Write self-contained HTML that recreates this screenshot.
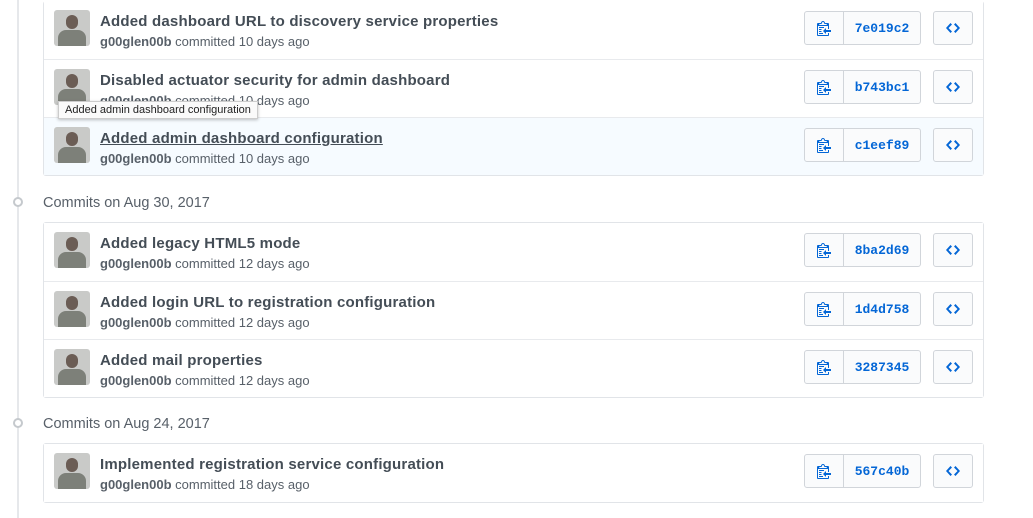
<!DOCTYPE html>
<html><head><meta charset="utf-8"><style>
*{box-sizing:border-box;margin:0;padding:0}
body{width:1033px;height:518px;background:#fff;font-family:"Liberation Sans",sans-serif;position:relative;overflow:hidden}
.line{position:absolute;left:17px;top:0;width:2px;height:518px;background:#e6e8eb}
.box{position:absolute;left:43px;width:941px;border:1px solid #e1e4e8;border-radius:3px}
.row{position:relative;height:58px;border-top:1px solid #e8eaed;background:#fff}
.row:first-child{border-top:none}
.row.hl{background:#f6fbff}
.av{position:absolute;left:10px;top:9px;width:36px;height:36px;border-radius:3px;background:#c9cac8;overflow:hidden}
.av .h{position:absolute;left:12px;top:5px;width:12px;height:14px;border-radius:6px;background:#6b5d55}
.av .b{position:absolute;left:4px;top:20px;width:28px;height:18px;border-radius:8px 8px 0 0;background:#7d8079}
.t{position:absolute;left:56px;top:12px;font-size:15px;letter-spacing:0.2px;font-weight:bold;color:#444d56;white-space:nowrap}
.t.u{text-decoration:underline}
.m{position:absolute;left:56px;top:33px;font-size:13px;color:#586069}
.m b{color:#586069}
.grp{position:absolute;left:760px;top:10px;height:34px;display:flex;border:1px solid #d1d5da;border-radius:3px;background:#fafbfc}
.grp .c{width:39px;border-right:1px solid #d1d5da;display:flex;align-items:center;justify-content:center}
.grp .s{width:76px;display:flex;align-items:center;justify-content:center;font-family:"Liberation Mono",monospace;font-weight:bold;font-size:13px;color:#0366d6}
.code{position:absolute;left:889px;top:10px;width:40px;height:34px;border:1px solid #d1d5da;border-radius:3px;background:#fafbfc;display:flex;align-items:center;justify-content:center}
.hd{position:absolute;left:43px;font-size:14.5px;color:#586069}
.dot{position:absolute;left:13px;width:10px;height:10px;border:2px solid #c5c9cd;border-radius:50%;background:#fff}
.tip{position:absolute;left:58px;top:101px;padding:2px 6px;font-size:11px;color:#222;background:#fafafa;border:1px solid #ccc;box-shadow:0 1px 3px rgba(0,0,0,.25);white-space:nowrap}
</style></head><body>
<div class="line"></div>

<div class="box" style="top:1px;border-top:none">
<div class="row"><div class="av"><div class="h"></div><div class="b"></div></div><div class="t">Added dashboard URL to discovery service properties</div><div class="m"><b>g00glen00b</b> committed 10 days ago</div>
<div class="grp"><div class="c">CLIP</div><div class="s">7e019c2</div></div><div class="code">CODE</div></div>
<div class="row"><div class="av"><div class="h"></div><div class="b"></div></div><div class="t">Disabled actuator security for admin dashboard</div><div class="m"><b>g00glen00b</b> committed 10 days ago</div>
<div class="grp"><div class="c">CLIP</div><div class="s">b743bc1</div></div><div class="code">CODE</div></div>
<div class="row hl"><div class="av"><div class="h"></div><div class="b"></div></div><div class="t u">Added admin dashboard configuration</div><div class="m"><b>g00glen00b</b> committed 10 days ago</div>
<div class="grp"><div class="c">CLIP</div><div class="s">c1eef89</div></div><div class="code">CODE</div></div>
</div>

<div class="dot" style="top:197px"></div>
<div class="hd" style="top:195px">Commits on Aug 30, 2017</div>

<div class="box" style="top:222px">
<div class="row"><div class="av"><div class="h"></div><div class="b"></div></div><div class="t">Added legacy HTML5 mode</div><div class="m"><b>g00glen00b</b> committed 12 days ago</div>
<div class="grp"><div class="c">CLIP</div><div class="s">8ba2d69</div></div><div class="code">CODE</div></div>
<div class="row"><div class="av"><div class="h"></div><div class="b"></div></div><div class="t">Added login URL to registration configuration</div><div class="m"><b>g00glen00b</b> committed 12 days ago</div>
<div class="grp"><div class="c">CLIP</div><div class="s">1d4d758</div></div><div class="code">CODE</div></div>
<div class="row"><div class="av"><div class="h"></div><div class="b"></div></div><div class="t">Added mail properties</div><div class="m"><b>g00glen00b</b> committed 12 days ago</div>
<div class="grp"><div class="c">CLIP</div><div class="s">3287345</div></div><div class="code">CODE</div></div>
</div>

<div class="dot" style="top:418px"></div>
<div class="hd" style="top:416px">Commits on Aug 24, 2017</div>

<div class="box" style="top:443px">
<div class="row"><div class="av"><div class="h"></div><div class="b"></div></div><div class="t">Implemented registration service configuration</div><div class="m"><b>g00glen00b</b> committed 18 days ago</div>
<div class="grp"><div class="c">CLIP</div><div class="s">567c40b</div></div><div class="code">CODE</div></div>
</div>

<div class="tip">Added admin dashboard configuration</div>

<script>
var clip='<svg width="14" height="16" viewBox="0 0 14 16" fill="#0366d6"><path d="M2 13h4v1H2v-1zm5-6H2v1h5V7zm2 3V8l-3 3 3 3v-2h5v-2H9zM4.5 9H2v1h2.5V9zM2 12h2.5v-1H2v1zm9 1h1v2c-.02.28-.11.52-.3.7-.19.18-.42.28-.7.3H1c-.55 0-1-.45-1-1V4c0-.55.45-1 1-1h3c0-1.11.89-2 2-2 1.11 0 2 .89 2 2h3c.55 0 1 .45 1 1v5h-1V6H1v9h10v-2zM2 5h8c0-.55-.45-1-1-1H8c-.55 0-1-.45-1-1s-.45-1-1-1-1 .45-1 1-.45 1-1 1H3c-.55 0-1 .45-1 1z"/></svg>';
var code='<svg width="14" height="16" viewBox="0 0 14 16" fill="#0366d6"><path d="M9.5 3L8 4.5 11.5 8 8 11.5 9.5 13 14 8 9.5 3zm-5 0L0 8l4.5 5L6 11.5 2.5 8 6 4.5 4.5 3z"/></svg>';
document.querySelectorAll('.c').forEach(function(e){e.innerHTML=clip});
document.querySelectorAll('.code').forEach(function(e){e.innerHTML=code});
</script>
</body></html>
